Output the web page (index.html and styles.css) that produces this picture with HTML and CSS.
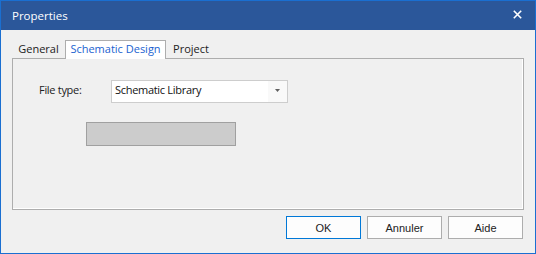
FILE: index.html
```html
<!DOCTYPE html>
<html>
<head>
<meta charset="utf-8">
<link rel="stylesheet" href="styles.css">
</head>
<body>
<div class="window">
  <div class="titlebar">
    <span class="title">Properties</span>
    <svg class="close" width="9" height="9" viewBox="0 0 9 9"><path d="M0.8 0.8 L8.2 8.2 M8.2 0.8 L0.8 8.2" stroke="#fff" stroke-width="1.6" fill="none"/></svg>
  </div>
  <div class="content">
    <div class="tabs">
      <div class="tab tab-general">General</div>
      <div class="tab tab-schematic active">Schematic Design</div>
      <div class="tab tab-project">Project</div>
    </div>
    <div class="panel">
      <div class="row">
        <span class="label">File type:</span>
        <div class="combo">
          <span class="combo-text">Schematic Library</span>
          <span class="combo-btn"><svg width="5" height="3" viewBox="0 0 5 3"><polygon points="0,0 5,0 2.5,3" fill="#606060"/></svg></span>
        </div>
      </div>
      <div class="graybox"></div>
    </div>
    <div class="buttons">
      <button class="btn default">OK</button>
      <button class="btn">Annuler</button>
      <button class="btn">Aide</button>
    </div>
  </div>
</div>
</body>
</html>
```

FILE: styles.css
```css
html, body {
  margin: 0;
  padding: 0;
}
body {
  width: 536px;
  height: 254px;
  overflow: hidden;
  background: #f0f0f0;
}
.window {
  box-sizing: border-box;
  width: 536px;
  height: 254px;
  border: 1px solid #1a6fd1;
  background: #f0f0f0;
  display: flex;
  flex-direction: column;
}
.titlebar {
  height: 29px;
  flex: none;
  background: #2b579a;
  display: flex;
  align-items: center;
  justify-content: space-between;
  padding: 0 13px 0 11px;
}
.title {
  color: #fff;
  font-family: "Open Sans", "Noto Sans", sans-serif;
  font-size: 11.5px;
  line-height: 14px;
  margin-top: 1px;
}
.close {
  display: block;
  margin-top: -3px;
}
.content {
  flex: 1;
  display: flex;
  flex-direction: column;
  padding: 10px 11px 0 11px;
}
.tabs {
  display: flex;
  height: 18px;
  align-items: flex-end;
}
.tab {
  box-sizing: border-box;
  height: 18px;
  font-family: "Open Sans", "Noto Sans", sans-serif;
  font-size: 11px;
  line-height: 16px;
  color: #222;
  text-align: center;
  white-space: nowrap;
  padding-top: 1px;
}
.tab-general { width: 53px; }
.tab-schematic { width: 101px; }
.tab-project { width: 50px; }
.tab.active {
  height: 19px;
  margin-bottom: -1px;
  background: #fff;
  border: 1px solid #adadad;
  border-bottom: none;
  color: #1a62d0;
  position: relative;
  z-index: 1;
  padding-top: 0;
}
.panel {
  box-sizing: border-box;
  height: 152px;
  border: 1px solid #adadad;
  box-shadow: inset -1px -1px 0 #fff, inset -2px -2px 0 #f0f0f0;
  background: #f0f0f0;
  padding: 21px 0 0 26px;
  display: flex;
  flex-direction: column;
  align-items: flex-start;
}
.row {
  display: flex;
  align-items: flex-start;
}
.label {
  width: 72px;
  font-family: "Open Sans", "Noto Sans", sans-serif;
  font-size: 11px;
  letter-spacing: -0.3px;
  line-height: 14px;
  color: #222;
  padding-top: 3px;
}
.combo {
  box-sizing: border-box;
  width: 177px;
  height: 23px;
  border: 1px solid #cdcdcd;
  background: #fff;
  display: flex;
  justify-content: space-between;
}
.combo-text {
  font-family: "Open Sans", "Noto Sans", sans-serif;
  font-size: 11px;
  letter-spacing: -0.3px;
  line-height: 14px;
  color: #111;
  padding: 2px 0 0 3px;
}
.combo-btn {
  width: 19px;
  background: #f9f9f9;
  display: flex;
  justify-content: center;
  padding-top: 8px;
  box-sizing: border-box;
}
.combo-btn svg {
  display: block;
  margin-left: -1px;
}
.graybox {
  box-sizing: border-box;
  width: 150px;
  height: 24px;
  margin: 19px 0 0 47px;
  background: #cccccc;
  border: 1px solid #a0a0a0;
}
.buttons {
  display: flex;
  justify-content: flex-end;
  gap: 6px;
  margin-top: 6px;
  padding-right: 1px;
}
.btn {
  box-sizing: border-box;
  width: 75px;
  height: 23px;
  margin: 0;
  padding: 0;
  border: 1px solid #adadad;
  background: #fdfdfd;
  font-family: "Liberation Sans", Arial, sans-serif;
  font-size: 11px;
  color: #222;
}
.btn.default {
  border-color: #0078d7;
}
```
